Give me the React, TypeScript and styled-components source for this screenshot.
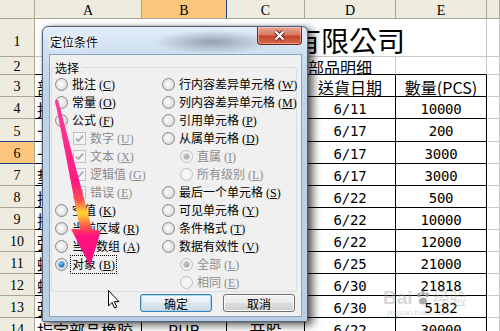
import React from 'react';
import styled, { createGlobalStyle } from 'styled-components';

const GlobalStyle = createGlobalStyle`
  html, body {
    margin: 0;
    padding: 0;
    background: #fff;
    overflow: hidden;
  }
`;

const CJK = `"Noto Sans CJK SC", "Noto Sans CJK TC", sans-serif`;
const CJK_TC = `"Noto Sans CJK TC", "Noto Sans CJK SC", sans-serif`;

const Screen = styled.div`
  position: relative;
  width: 500px;
  height: 331px;
  overflow: hidden;
  background: #fff;
  font-family: ${CJK};
`;

/* ---------- spreadsheet ---------- */

const Sheet = styled.div`
  display: grid;
  grid-template-columns: 35px 107px 85px 78px 91px 91px 13px;
  grid-template-rows: 19px 38px 18px 22px 22px 23px 22px 22px 22px 22px 22px 22px 22px 22px 22px;
`;

const HeadCell = styled.div<{ $active?: boolean; $row?: boolean; $drop?: number }>`
  box-sizing: border-box;
  display: flex;
  align-items: center;
  justify-content: center;
  padding-top: ${({ $drop }) => $drop ?? 3}px;
  background: ${({ $active }) => ($active ? '#fcc77c' : '#eeebdf')};
  border-right: 1px solid ${({ $active, $row }) => ($active && !$row ? '#1d3f8f' : '#aaa697')};
  border-bottom: 1px solid ${({ $active, $row }) => ($active && $row ? '#1d3f8f' : '#aaa697')};
  border-top: ${({ $active, $row }) => ($active && $row ? '1px solid #1d3f8f' : 'none')};
  margin-top: ${({ $active, $row }) => ($active && $row ? '-1px' : '0')};
  font-family: 'Liberation Serif', serif;
  font-size: 14px;
  color: #000;
  overflow: hidden;
`;

const Cell = styled.div<{ $table?: boolean; $edge?: boolean; $align?: 'left' | 'center' | 'right' }>`
  box-sizing: border-box;
  display: flex;
  align-items: center;
  justify-content: ${({ $align }) =>
    $align === 'center' ? 'center' : $align === 'right' ? 'flex-end' : 'flex-start'};
  padding-top: 2px;
  border-right: 1px solid ${({ $table }) => ($table ? '#000' : '#c8c8c8')};
  border-bottom: 1px solid ${({ $table, $edge }) => ($table || $edge ? '#000' : '#c8c8c8')};
  white-space: nowrap;
  overflow: hidden;
  font-family: ${CJK_TC};
  font-size: 16px;
  line-height: 1;
  color: #000;
`;

const TitleCell = styled(Cell)`
  grid-column: span 5;
  border-right-color: #c8c8c8;
  padding-right: 81px;
  padding-top: 5px;
  font-size: 28px;
`;

const SubTitleCell = styled(Cell)`
  grid-column: span 4;
  padding-right: 23px;
`;

const Number = styled.span`
  font-family: 'DejaVu Sans Mono', 'Liberation Mono', monospace;
  font-size: 14px;
  letter-spacing: -0.2px;
`;

const NameText = styled.span`
  padding-left: 2px;
`;

/* ---------- dialog ---------- */

const Window = styled.div`
  position: absolute;
  left: 42px;
  top: 26px;
  width: 266px;
  height: 296px;
  box-sizing: border-box;
  display: flex;
  flex-direction: column;
  padding: 0 5px 4px 6px;
  border: 1px solid #506479;
  border-radius: 6px 6px 2px 2px;
  background:
    radial-gradient(ellipse 60px 12px at 170px 15px, rgba(95, 105, 118, 0.55), rgba(95, 105, 118, 0) 100%),
    linear-gradient(to bottom, #e2edf8 0, #cddff1 26px, #bfd3e9 60px, #b9cde4 100%);
  box-shadow: 5px 3px 8px rgba(0, 0, 0, 0.65), 0 0 2px rgba(0, 0, 0, 0.4);
`;

const TitleBar = styled.div`
  height: 27px;
  flex: none;
  display: flex;
  align-items: flex-start;
  justify-content: space-between;
`;

const TitleText = styled.div`
  padding: 8px 0 0 1px;
  font-size: 12px;
  line-height: 13px;
  color: #000;
  text-shadow: 0 0 4px #fff, 0 0 6px #fff, 0 0 2px #fff;
`;

const CloseButton = styled.div`
  width: 45px;
  height: 18px;
  box-sizing: border-box;
  display: flex;
  align-items: center;
  justify-content: center;
  border: 1px solid #6e2a20;
  border-top: none;
  border-radius: 0 0 4px 4px;
  background: linear-gradient(to bottom, #e9a99b 0, #d8775f 45%, #c7442a 55%, #d36a4c 100%);
  box-shadow: inset 0 0 0 1px rgba(255, 220, 210, 0.45);
`;

const Client = styled.div`
  flex: 1;
  display: flex;
  flex-direction: column;
  background: #f0f0f0;
  border: 1px solid #8da2bb;
`;

const Group = styled.fieldset`
  margin: 6px 4px 0 1px;
  padding: 1px 4px 0 3px;
  border: 1px solid #d5dfe5;
  border-radius: 3px;
  min-width: 0;
`;

const GroupLabel = styled.legend`
  padding: 0 3px 0 0;
  font-size: 12px;
  line-height: 13px;
  color: #000;
`;

const Columns = styled.div`
  display: grid;
  grid-template-columns: 107px 1fr;
`;

const Column = styled.div`
  display: flex;
  flex-direction: column;
`;

const Option = styled.div<{ $indent?: boolean }>`
  height: 18px;
  display: flex;
  align-items: center;
  gap: 4px;
  padding-left: ${({ $indent }) => ($indent ? 18 : 0)}px;
  white-space: nowrap;
`;

const Radio = styled.span<{ $checked?: boolean; $disabled?: boolean }>`
  flex: none;
  width: 13px;
  height: 13px;
  box-sizing: border-box;
  display: inline-flex;
  align-items: center;
  justify-content: center;
  border-radius: 50%;
  border: 1px solid ${({ $disabled }) => ($disabled ? '#c2c2c2' : '#8a8a8a')};
  background: ${({ $disabled }) =>
    $disabled
      ? 'radial-gradient(circle at 50% 50%, #fafafa 0, #ececec 100%)'
      : 'radial-gradient(circle at 45% 45%, #ffffff 0, #e6e6e6 50%, #c4c4c4 100%)'};

  &::after {
    content: '';
    display: ${({ $checked }) => ($checked ? 'block' : 'none')};
    width: 5px;
    height: 5px;
    border-radius: 50%;
    background: ${({ $disabled }) =>
      $disabled
        ? 'radial-gradient(circle at 40% 40%, #c8c8c8 0, #8e8e8e 100%)'
        : 'radial-gradient(circle at 40% 35%, #8fd6ff 0, #2a86c8 45%, #0f3f75 100%)'};
    box-shadow: ${({ $disabled }) => ($disabled ? '0 0 0 1px #d6d6d6' : '0 0 0 1px #7fb3dc')};
  }
`;

const CheckBox = styled.span`
  flex: none;
  width: 13px;
  height: 13px;
  box-sizing: border-box;
  display: inline-flex;
  align-items: center;
  justify-content: center;
  border: 1px solid #c2c2c2;
  background: #f4f4f4;
`;

const OptionText = styled.span<{ $disabled?: boolean; $focus?: boolean }>`
  font-size: 12px;
  line-height: 13px;
  color: ${({ $disabled }) => ($disabled ? '#8d8d8d' : '#000')};
  outline: ${({ $focus }) => ($focus ? '1px dotted #000' : 'none')};
  outline-offset: 1px;
`;

const Key = styled.span`
  margin-left: 3px;
  font-family: 'Liberation Serif', serif;
  font-size: 12px;

  u {
    text-decoration: underline;
    text-underline-offset: 1px;
  }
`;

const ButtonRow = styled.div`
  display: flex;
  justify-content: flex-end;
  gap: 11px;
  margin-top: 2px;
  padding-right: 6px;
`;

const Button = styled.div<{ $default?: boolean }>`
  width: 72px;
  height: 18px;
  box-sizing: border-box;
  display: flex;
  align-items: center;
  justify-content: center;
  border-radius: 3px;
  border: 1px solid ${({ $default }) => ($default ? '#3c7fb1' : '#707070')};
  background: ${({ $default }) =>
    $default
      ? 'linear-gradient(to bottom, #f3f7fa 0, #e6eef4 50%, #d8e4ee 51%, #cfdde9 100%)'
      : 'linear-gradient(to bottom, #f2f2f2 0, #ebebeb 50%, #dddddd 51%, #cfcfcf 100%)'};
  box-shadow: ${({ $default }) => ($default ? 'inset 0 0 0 1px #a6d6f4' : 'inset 0 0 0 1px #fcfcfc')};
  font-size: 12px;
  line-height: 13px;
  color: #000;
`;

/* ---------- overlays ---------- */

const Overlay = styled.svg`
  position: absolute;
  left: 0;
  top: 0;
  pointer-events: none;
`;

const Watermark = styled.div`
  position: absolute;
  left: 383px;
  top: 288px;
  display: flex;
  flex-direction: column;
  align-items: flex-start;
  color: rgba(150, 150, 150, 0.4);
  pointer-events: none;
`;

const MarkTop = styled.div`
  display: flex;
  align-items: center;
  gap: 2px;
  font-family: 'Liberation Sans', sans-serif;
  font-weight: bold;
  font-size: 19px;
  line-height: 20px;
`;

const MarkCjk = styled.span`
  font-family: ${CJK};
  font-size: 17px;
  font-weight: normal;
`;

const MarkUrl = styled.div`
  margin-left: 4px;
  font-family: 'Liberation Sans', sans-serif;
  font-size: 8px;
  line-height: 10px;
`;

type Opt = {
  t: string;
  k: string;
  sub?: boolean;
  check?: boolean;
  dis?: boolean;
  on?: boolean;
  focus?: boolean;
};

const leftOptions: Opt[] = [
  { t: '批注', k: 'C' },
  { t: '常量', k: 'O' },
  { t: '公式', k: 'F' },
  { t: '数字', k: 'U', sub: true, check: true, dis: true },
  { t: '文本', k: 'X', sub: true, check: true, dis: true },
  { t: '逻辑值', k: 'G', sub: true, check: true, dis: true },
  { t: '错误', k: 'E', sub: true, check: true, dis: true },
  { t: '空值', k: 'K' },
  { t: '当前区域', k: 'R' },
  { t: '当前数组', k: 'A' },
  { t: '对象', k: 'B', on: true, focus: true },
];

const rightOptions: Opt[] = [
  { t: '行内容差异单元格', k: 'W' },
  { t: '列内容差异单元格', k: 'M' },
  { t: '引用单元格', k: 'P' },
  { t: '从属单元格', k: 'D' },
  { t: '直属', k: 'I', sub: true, dis: true, on: true },
  { t: '所有级别', k: 'L', sub: true, dis: true },
  { t: '最后一个单元格', k: 'S' },
  { t: '可见单元格', k: 'Y' },
  { t: '条件格式', k: 'T' },
  { t: '数据有效性', k: 'V' },
  { t: '全部', k: 'L', sub: true, dis: true, on: true },
  { t: '相同', k: 'E', sub: true, dis: true },
];

const dates = ['6/11', '6/17', '6/17', '6/17', '6/22', '6/22', '6/22', '6/25', '6/30', '6/30', '6/22'];
const amounts = ['10000', '200', '3000', '3000', '500', '10000', '12000', '21000', '21818', '5182', '30000'];
const names = ['挂钩', '卡扣', '卡扣', '垫片', '插头', '插头', '弹片', '螺丝', '螺母', '弹簧', '指定部品橡胶'];

const OptionRow: React.FC<{ o: Opt }> = ({ o }) => (
  <Option $indent={o.sub}>
    {o.check ? (
      <CheckBox>
        <svg width="9" height="9" viewBox="0 0 9 9">
          <path d="M1 4.6 L3.4 7 L8 1.6" fill="none" stroke="#a9a9a9" strokeWidth="1.8" />
        </svg>
      </CheckBox>
    ) : (
      <Radio $checked={o.on} $disabled={o.dis} />
    )}
    <OptionText $disabled={o.dis} $focus={o.focus}>
      {o.t}
      <Key>
        (<u>{o.k}</u>)
      </Key>
    </OptionText>
  </Option>
);

const App: React.FC = () => {
  return (
    <Screen>
      <GlobalStyle />
      <Sheet>
        <HeadCell />
        {['A', 'B', 'C', 'D', 'E', ''].map((c, i) => (
          <HeadCell key={i} $active={c === 'B'}>
            {c}
          </HeadCell>
        ))}

        <HeadCell $row $drop={9}>1</HeadCell>
        <TitleCell $align="right">宏達電子有限公司</TitleCell>
        <Cell />

        <HeadCell $row>2</HeadCell>
        <SubTitleCell $align="right" $edge>
          部品明细
        </SubTitleCell>
        <Cell $edge />
        <Cell />

        <HeadCell $row>3</HeadCell>
        <Cell $table>
          <NameText>部品名称</NameText>
        </Cell>
        <Cell $table $align="center">规格</Cell>
        <Cell $table $align="center">单位</Cell>
        <Cell $table $align="center">送貨日期</Cell>
        <Cell $table $align="center">數量(PCS)</Cell>
        <Cell />

        {dates.map((d, i) => (
          <React.Fragment key={i}>
            <HeadCell $row $active={i + 4 === 6}>
              {i + 4}
            </HeadCell>
            <Cell $table>
              <NameText>{names[i]}</NameText>
            </Cell>
            <Cell $table $align="center">{i === 10 ? 'RUB' : ''}</Cell>
            <Cell $table $align="center">{i === 10 ? '开股' : ''}</Cell>
            <Cell $table $align="center">
              <Number>{d}</Number>
            </Cell>
            <Cell $table $align="center">
              <Number>{amounts[i]}</Number>
            </Cell>
            <Cell />
          </React.Fragment>
        ))}
      </Sheet>

      <Window>
        <TitleBar>
          <TitleText>定位条件</TitleText>
          <CloseButton>
            <svg width="13" height="11" viewBox="0 0 13 11">
              <path d="M2.5 1.5 L10.5 9.5 M10.5 1.5 L2.5 9.5" stroke="#5a2118" strokeWidth="4" />
              <path d="M2.5 1.5 L10.5 9.5 M10.5 1.5 L2.5 9.5" stroke="#ffffff" strokeWidth="2.2" />
            </svg>
          </CloseButton>
        </TitleBar>
        <Client>
          <Group>
            <GroupLabel>选择</GroupLabel>
            <Columns>
              <Column>
                {leftOptions.map((o, i) => (
                  <OptionRow key={i} o={o} />
                ))}
              </Column>
              <Column>
                {rightOptions.map((o, i) => (
                  <OptionRow key={i} o={o} />
                ))}
              </Column>
            </Columns>
          </Group>
          <ButtonRow>
            <Button $default>确定</Button>
            <Button>取消</Button>
          </ButtonRow>
        </Client>
      </Window>

      <Watermark>
        <MarkTop>
          Bai
          <svg width="16" height="16" viewBox="0 0 16 16">
            <g fill="rgba(150,150,150,0.8)">
              <ellipse cx="4" cy="5" rx="1.8" ry="2.4" />
              <ellipse cx="8" cy="3" rx="1.8" ry="2.4" />
              <ellipse cx="12" cy="5" rx="1.8" ry="2.4" />
              <ellipse cx="8" cy="11" rx="4" ry="3.6" />
            </g>
          </svg>
          <MarkCjk>经验</MarkCjk>
        </MarkTop>
        <MarkUrl>jingyan.baidu.com</MarkUrl>
      </Watermark>

      <Overlay width="500" height="331" viewBox="0 0 500 331">
        <defs>
          <linearGradient id="arrowFill" gradientUnits="userSpaceOnUse" x1="0" y1="100" x2="0" y2="266">
            <stop offset="0" stopColor="#ff3b9a" />
            <stop offset="0.5" stopColor="#ff1a82" />
            <stop offset="0.6" stopColor="#ff4d55" />
            <stop offset="0.68" stopColor="#ffd92a" />
            <stop offset="0.76" stopColor="#ff5a48" />
            <stop offset="0.82" stopColor="#ff1282" />
            <stop offset="1" stopColor="#ff0a7c" />
          </linearGradient>
        </defs>
        <path
          d="M55 100 L58 100 L92 229 L101 231 L90 266 L71 229 L80 229 Z"
          fill="url(#arrowFill)"
        />
        <path
          d="M108.5 290.5 L108.5 306 L112 302.5 L114.5 308 L116.8 307 L114.3 301.7 L119 301.7 Z"
          fill="#fff"
          stroke="#000"
          strokeWidth="1"
          strokeLinejoin="round"
        />
      </Overlay>
    </Screen>
  );
};

export default App;
